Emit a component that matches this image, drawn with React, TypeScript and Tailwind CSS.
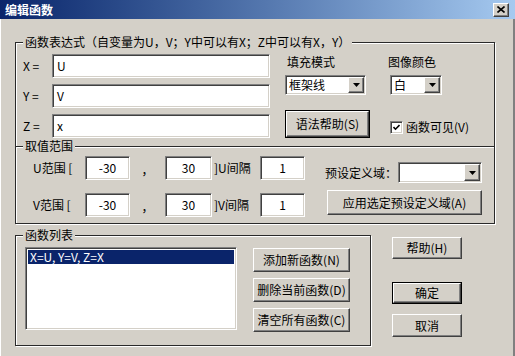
import React from 'react';

const raised =
  'bg-[#d4d0c8] border border-t-white border-l-white border-r-[#404040] border-b-[#404040] shadow-[inset_-1px_-1px_0_#808080]';
const sunken =
  'bg-white border border-t-[#808080] border-l-[#808080] border-r-white border-b-white shadow-[inset_1px_1px_0_#404040,inset_-1px_-1px_0_#d4d0c8]';

function Group({ label, className, children }: { label: string; className: string; children: React.ReactNode }) {
  return (
    <div className={`border border-[#2a2a2a] shadow-[inset_1px_1px_0_#fff,1px_1px_0_#fff] flex flex-col ${className}`}>
      <span className="-mt-[8px] ml-[7px] px-[2px] bg-[#d4d0c8] w-fit leading-[14px] whitespace-nowrap">{label}</span>
      {children}
    </div>
  );
}

function Button({ label, className, isDefault }: { label: string; className: string; isDefault?: boolean }) {
  if (isDefault) {
    return (
      <div className={`border border-black flex ${className}`}>
        <div className={`${raised} flex-1 flex items-center justify-center whitespace-nowrap`}>{label}</div>
      </div>
    );
  }
  return <div className={`${raised} flex items-center justify-center whitespace-nowrap ${className}`}>{label}</div>;
}

function Arrow() {
  return (
    <div className={`${raised} w-[16px] h-full flex items-center justify-center`}>
      <svg width="7" height="4" viewBox="0 0 7 4">
        <path d="M0 0h7L3.5 4z" fill="#000" />
      </svg>
    </div>
  );
}

function Combo({ value, className }: { value: string; className: string }) {
  return (
    <div className={`${sunken} flex items-stretch p-[1px] ${className}`}>
      <span className="flex-1 pl-[2px] flex items-center">{value}</span>
      <Arrow />
    </div>
  );
}

function Field({ value, className }: { value: string; className: string }) {
  return <div className={`${sunken} flex items-center justify-center ${className}`}>{value}</div>;
}

export default function App() {
  return (
    <div className="w-[515px] h-[356px] bg-[#d4d0c8] text-[12px] leading-[14px] text-black font-['Noto_Sans_CJK_SC','Liberation_Sans',sans-serif] overflow-hidden flex flex-col">
      <div className="h-[19px] shrink-0 flex items-center justify-between pl-[5px] pr-[6px] bg-gradient-to-r from-[#0a246a] to-[#a6caf0]">
        <span className="text-white font-bold">编辑函数</span>
        <div className={`${raised} w-[16px] h-[14px] flex items-center justify-center`}>
          <svg width="8" height="7" viewBox="0 0 8 7">
            <path d="M0.5 0.5l7 6M7.5 0.5l-7 6" stroke="#000" strokeWidth="1.6" />
          </svg>
        </div>
      </div>

      <div className="flex-1 border-l border-white border-r-2 border-r-[#808080] pl-[14px] pt-[23px]">
        <Group label="函数表达式（自变量为U，V；Y中可以有X；Z中可以有X，Y）" className="w-[480px] h-[105px]">
          <div className="flex">
            <div className="flex flex-col gap-[6px] pl-[7px] mt-[5px]">
              {[
                ['X =', 'U'],
                ['Y =', 'V'],
                ['Z =', 'x'],
              ].map(([l, v]) => (
                <div key={l} className="flex items-center h-[24px]">
                  <span className="w-[29px]">{l}</span>
                  <div className={`${sunken} w-[218px] h-[24px] flex items-center pl-[4px]`}>{v}</div>
                </div>
              ))}
            </div>
            <div className="flex flex-col w-[85px] ml-[15px]">
              <span className="pl-[2px] mt-[6px]">填充模式</span>
              <Combo value="框架线" className="mt-[6px] w-[81px] h-[20px]" />
              <Button label="语法帮助(S)" className="mt-[15px] w-[85px] h-[28px]" isDefault />
            </div>
            <div className="flex flex-col ml-[18px]">
              <span className="mt-[6px]">图像颜色</span>
              <Combo value="白" className="mt-[6px] ml-[2px] w-[52px] h-[20px]" />
              <div className="flex items-center gap-[3px] ml-[2px] mt-[25px]">
                <div className={`${sunken} w-[13px] h-[13px] flex items-center justify-center`}>
                  <svg width="7" height="7" viewBox="0 0 7 7">
                    <path d="M0.5 3l2 2.2L6.5 1" stroke="#000" strokeWidth="1.6" fill="none" />
                  </svg>
                </div>
                <span>函数可见(V)</span>
              </div>
            </div>
          </div>
        </Group>

        <Group label="取值范围" className="w-[480px] h-[78px] -mt-px">
          <div className="flex">
            <div className="flex flex-col gap-[13px] mt-[3px] pl-[17px]">
              {['U', 'V'].map((k) => (
                <div key={k} className="flex items-center h-[24px]">
                  <span className="w-[52px]">{k}范围 [</span>
                  <Field value="-30" className="w-[45px] h-[24px]" />
                  <span className="w-[35px] text-center mt-[4px]">，</span>
                  <Field value="30" className="w-[47px] h-[24px]" />
                  <span className="w-[48px] pl-[2px]">]{k}间隔</span>
                  <Field value="1" className="w-[45px] h-[24px]" />
                </div>
              ))}
            </div>
            <div className="flex flex-col ml-[20px] mt-[9px]">
              <div className="flex items-center">
                <span className="w-[73px]">预设定义域：</span>
                <Combo value="" className="w-[84px] h-[21px]" />
              </div>
              <Button label="应用选定预设定义域(A)" className="ml-[2px] mt-[7px] w-[155px] h-[25px]" />
            </div>
          </div>
        </Group>

        <div className="flex mt-[11px]">
          <Group label="函数列表" className="w-[356px] h-[111px]">
            <div className="flex">
              <div className={`${sunken} ml-[9px] mt-[5px] w-[212px] h-[83px] p-[2px]`}>
                <div className="h-[14px] bg-[#0a246a] text-white pl-[2px] flex items-center">X=U, Y=V, Z=X</div>
              </div>
              <div className="flex flex-col gap-[6px] ml-[16px] mt-[6px]">
                <Button label="添加新函数(N)" className="w-[97px] h-[24px]" />
                <Button label="删除当前函数(D)" className="w-[97px] h-[24px]" />
                <Button label="清空所有函数(C)" className="w-[97px] h-[24px]" />
              </div>
            </div>
          </Group>
          <div className="flex flex-col ml-[21px]">
            <Button label="帮助(H)" className="mt-[2px] w-[70px] h-[22px]" />
            <Button label="确定" className="mt-[23px] w-[70px] h-[22px]" isDefault />
            <Button label="取消" className="mt-[10px] w-[70px] h-[23px]" />
          </div>
        </div>
      </div>
    </div>
  );
}
